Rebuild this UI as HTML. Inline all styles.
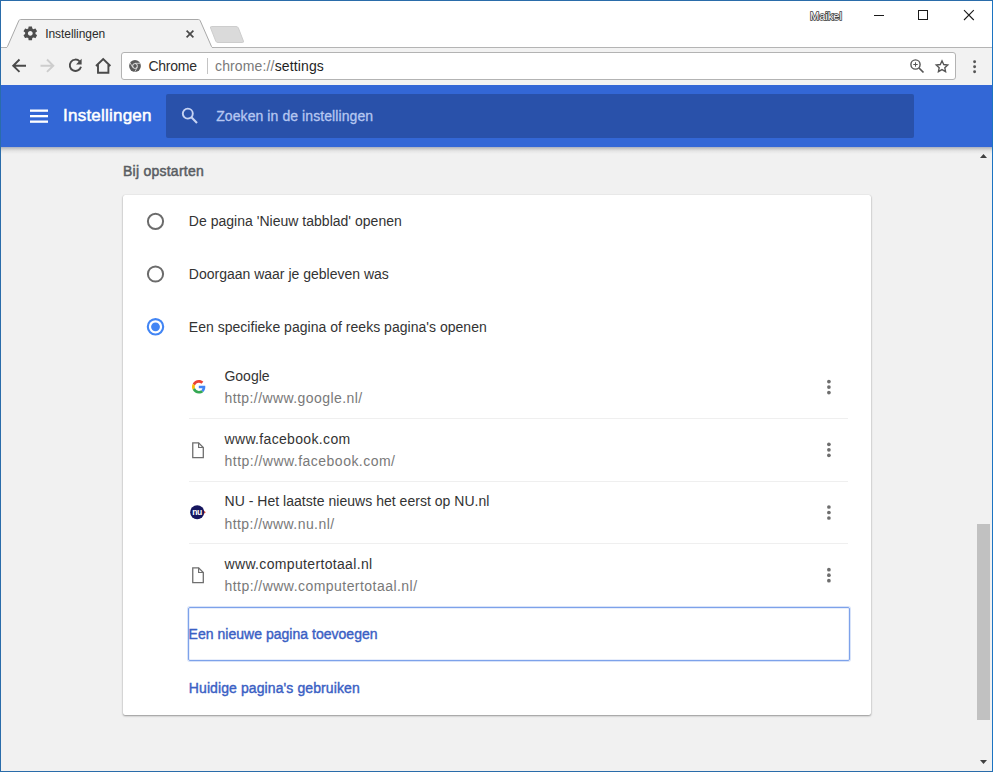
<!DOCTYPE html>
<html lang="nl">
<head>
<meta charset="utf-8">
<title>Instellingen</title>
<style>
*{box-sizing:border-box;margin:0;padding:0}
html,body{width:993px;height:772px;overflow:hidden;background:#fff}
body{font-family:"Liberation Sans",sans-serif;position:relative;color:#333}
.abs{position:absolute}
#c{position:absolute;left:0;top:0;width:993px;height:772px;overflow:hidden;background:#fff}
#toolbar{left:1px;top:48px;width:991px;height:37px;background:#f2f2f2}
#omni{left:121px;top:52px;width:835px;height:28px;background:#fff;border:1px solid #b3b3b3;border-radius:3px}
#osep{left:207px;top:58px;width:1px;height:16px;background:#c4c4c4}
#hdr{left:1px;top:85px;width:991px;height:62px;background:#3367d6}
#hdrshadow{left:1px;top:147px;width:991px;height:7px;background:linear-gradient(#a9b0c2 0,#c9c9c9 25%,#e4e4e4 55%,#f1f1f1 100%)}
#search{left:166px;top:94px;width:748px;height:44px;background:#2951aa;border-radius:2px}
#page{left:1px;top:147px;width:991px;height:624px;background:#f1f1f1}
#card{left:123px;top:195px;width:748px;height:520px;background:#fff;border-radius:2px;box-shadow:0 1px 2px rgba(0,0,0,.38),0 0 1px rgba(0,0,0,.18)}
#focus{left:188px;top:607px;width:662px;height:54px;border:1px solid #7da2ea;border-radius:2px;box-shadow:0 0 0 1px rgba(125,162,234,.3),inset 0 0 0 1px rgba(125,162,234,.18)}
.t{position:absolute;white-space:nowrap;line-height:20px;height:20px}
.sep{position:absolute;left:189px;width:659px;height:1px;background:#efefef}
#thumb{left:977px;top:524px;width:13px;height:196px;background:#c1c1c1}
#frame{left:0;top:0;width:993px;height:772px;border:1px solid #2a6caa;border-right-color:#1c74c2;pointer-events:none}
svg{position:absolute;overflow:visible}
</style>
</head>
<body>
<div id="c">

<!-- tab strip -->
<svg style="left:0;top:0" width="993" height="49" viewBox="0 0 993 49">
  <path d="M1 47.500 L992 47.500" fill="none" stroke="#b4b4b4" stroke-width="1"/>
  <path d="M5.500 48 L6.700 47.500 L7.600 46.300 L18.800 20.700 Q19.300 19.500 20.600 19.500 L198.400 19.500 Q199.700 19.500 200.200 20.700 L211.400 46.300 L212.300 47.500 L213.500 48 Z" fill="#f2f2f2"/>
  <path d="M5.500 47.500 L6.700 47.500 Q7.300 47 7.600 46.300 L18.800 20.700 Q19.300 19.500 20.600 19.500 L198.400 19.500 Q199.700 19.500 200.200 20.700 L211.400 46.300 Q211.700 47 212.300 47.500 L213.500 47.500" fill="none" stroke="#a9a9a9" stroke-width="1"/>
  <!-- new tab button -->
  <path d="M211.500 26.500 L236 26.500 Q237.800 26.500 238.400 28 L243.400 41 Q244 42.500 242.300 42.500 L218 42.500 Q216.300 42.500 215.700 41 L210.600 28 Q210 26.500 211.500 26.500 Z" fill="#dadada" stroke="#cdcdcd" stroke-width="1"/>
</svg>

<!-- tab favicon: gear -->
<svg style="left:22.300px;top:25.200px" width="16.600" height="16.600" viewBox="0 0 24 24"><path fill="#4d4d4d" d="M19.430 12.980c.04-.32.070-.64.070-.98s-.03-.66-.07-.98l2.110-1.650c.19-.15.240-.42.120-.64l-2-3.460c-.12-.22-.39-.3-.61-.22l-2.490 1c-.52-.4-1.080-.73-1.690-.98l-.38-2.650C14.460 2.180 14.250 2 14 2h-4c-.25 0-.46.180-.49.420l-.38 2.650c-.61.250-1.170.590-1.690.980l-2.490-1c-.23-.09-.49 0-.61.220l-2 3.460c-.13.220-.07.490.12.640l2.110 1.650c-.04.320-.07.650-.07.980s.03.660.07.980l-2.110 1.650c-.19.150-.24.420-.12.640l2 3.460c.12.220.39.300.61.220l2.490-1c.52.400 1.080.730 1.690.980l.38 2.650c.03.240.24.420.49.420h4c.25 0 .46-.18.490-.42l.38-2.650c.61-.25 1.170-.59 1.690-.98l2.490 1c.23.090.49 0 .61-.22l2-3.460c.12-.22.070-.49-.12-.64l-2.110-1.650zM12 15.500c-1.930 0-3.500-1.570-3.500-3.500s1.570-3.500 3.500-3.500 3.500 1.570 3.500 3.500-1.570 3.500-3.500 3.500z"/></svg>
<!-- tab close -->
<svg style="left:186px;top:30.300px" width="8" height="8" viewBox="0 0 8 8"><path d="M0.600 0.600L7.400 7.400M7.400 0.600L0.600 7.400" stroke="#4a4a4a" stroke-width="1.700" fill="none"/></svg>

<!-- window controls -->
<svg style="left:860px;top:0" width="132" height="30" viewBox="0 0 132 30">
  <rect x="14" y="15" width="10" height="1" fill="#1a1a1a"/>
  <rect x="58.500" y="10.500" width="9" height="9" fill="none" stroke="#1a1a1a" stroke-width="1"/>
  <path d="M104 10.200L113.800 20M113.800 10.200L104 20" stroke="#1a1a1a" stroke-width="1.100" fill="none"/>
</svg>

<div class="abs" id="toolbar"></div>
<div class="abs" id="omni"></div>
<div class="abs" id="osep"></div>

<!-- toolbar icons -->
<svg style="left:8px;top:50px" width="110" height="32" viewBox="0 0 110 32">
  <!-- back -->
  <path d="M18 15.700H5.500M11.500 9.500L5.200 15.700L11.500 21.900" stroke="#4a4a4a" stroke-width="1.900" fill="none"/>
  <!-- forward (disabled) -->
  <path d="M32.500 15.700H45M39 9.500L45.300 15.700L39 21.900" stroke="#cdcdcd" stroke-width="1.900" fill="none"/>
  <!-- reload -->
  <path d="M71.600 11.300A5.700 5.700 0 1 0 73 16.800" stroke="#4a4a4a" stroke-width="1.900" fill="none"/>
  <path d="M73.600 8.800V14.400H68z" fill="#4a4a4a"/>
  <!-- home -->
  <path d="M88 16L95.200 9L102.400 16M90 14.500V22.700H100.400V14.500" stroke="#4a4a4a" stroke-width="1.900" fill="none"/>
</svg>

<!-- omnibox chrome icon -->
<svg style="left:129px;top:60px" width="12" height="12" viewBox="0 0 12 12">
  <circle cx="6" cy="6" r="5.900" fill="#5a5a5a"/>
  <circle cx="6" cy="6" r="2.700" fill="#f3f3f3"/>
  <circle cx="6" cy="6" r="1.900" fill="#5a5a5a"/>
  <path d="M6 3.300H11.200M3.700 7.350L1.100 2.800M8.300 7.350L5.700 11.900" stroke="#f3f3f3" stroke-width="0.700" fill="none"/>
</svg>

<!-- omnibox right icons -->
<svg style="left:905px;top:54px" width="50" height="24" viewBox="0 0 50 24">
  <circle cx="10.500" cy="10.500" r="4.600" fill="none" stroke="#555" stroke-width="1.400"/>
  <path d="M14 14L18.500 18.500" stroke="#555" stroke-width="1.700" fill="none"/>
  <path d="M8.300 10.500H12.700M10.500 8.300V12.700" stroke="#555" stroke-width="1" fill="none"/>
  <path transform="translate(37 12.400) scale(0.900) translate(-37 -12.400)" d="M37 6.200L38.900 10.300L43.400 10.800L40.100 13.800L41 18.200L37 16L33 18.200L33.900 13.800L30.600 10.800L35.100 10.300Z" fill="none" stroke="#555" stroke-width="1.500" stroke-linejoin="miter"/>
</svg>
<svg style="left:972px;top:59px" width="6" height="15" viewBox="0 0 6 15">
  <circle cx="2.600" cy="2.700" r="1.450" fill="#555"/><circle cx="2.600" cy="7.700" r="1.450" fill="#555"/><circle cx="2.600" cy="12.700" r="1.450" fill="#555"/>
</svg>

<div class="abs" id="page"></div>
<div class="abs" id="hdrshadow"></div>
<div class="abs" id="hdr"></div>
<div class="abs" id="search"></div>

<!-- hamburger -->
<svg style="left:30px;top:109px" width="19" height="15" viewBox="0 0 19 15">
  <rect x="0" y="0.500" width="18" height="2.300" fill="#fff"/><rect x="0" y="6" width="18" height="2.300" fill="#fff"/><rect x="0" y="11.500" width="18" height="2.300" fill="#fff"/>
</svg>
<!-- search icon -->
<svg style="left:180px;top:106px" width="20" height="20" viewBox="0 0 20 20">
  <circle cx="7.800" cy="7.600" r="5" fill="none" stroke="#c6d3f3" stroke-width="1.900"/>
  <path d="M11.400 11.300L17 17" stroke="#c6d3f3" stroke-width="2.100" fill="none"/>
</svg>

<div class="abs" id="card"></div>

<!-- radios -->
<svg style="left:146px;top:212px" width="20" height="126" viewBox="0 0 20 126">
  <circle cx="9.500" cy="9.300" r="7.600" fill="#fff" stroke="#6b6b6b" stroke-width="2"/>
  <circle cx="9.500" cy="62" r="7.600" fill="#fff" stroke="#6b6b6b" stroke-width="2"/>
  <circle cx="9.500" cy="114.800" r="7.700" fill="#fff" stroke="#4285f4" stroke-width="2.100"/>
  <circle cx="9.500" cy="114.800" r="4.400" fill="#4285f4"/>
</svg>

<!-- favicons -->
<svg style="left:191.500px;top:380.400px" width="13.600" height="13.600" viewBox="0 0 48 48">
  <path fill="#EA4335" d="M24 9.500c3.540 0 6.710 1.220 9.210 3.600l6.850-6.850C35.900 2.380 30.470 0 24 0 14.620 0 6.510 5.380 2.560 13.220l7.980 6.190C12.430 13.720 17.740 9.500 24 9.500z"/>
  <path fill="#4285F4" d="M46.980 24.550c0-1.570-.15-3.090-.38-4.550H24v9.020h12.940c-.58 2.960-2.260 5.480-4.780 7.180l7.730 6c4.510-4.180 7.090-10.360 7.090-17.650z"/>
  <path fill="#FBBC05" d="M10.530 28.590c-.48-1.450-.76-2.990-.76-4.590s.27-3.140.76-4.590l-7.980-6.190C.92 16.460 0 20.120 0 24c0 3.880.92 7.540 2.560 10.780l7.970-6.190z"/>
  <path fill="#34A853" d="M24 48c6.480 0 11.930-2.130 15.890-5.810l-7.730-6c-2.150 1.450-4.920 2.300-8.160 2.300-6.260 0-11.570-4.220-13.470-9.910l-7.980 6.190C6.510 42.620 14.620 48 24 48z"/>
</svg>
<svg style="left:192px;top:441.500px" width="13" height="17" viewBox="0 0 13 17">
  <path d="M0.750 0.850H6.600L11.300 5.500V15.650H0.750Z" fill="#fff" stroke="#6f6f6f" stroke-width="1.300" stroke-linejoin="miter"/>
  <path d="M6.600 0.850V5.500H11.300" fill="none" stroke="#6f6f6f" stroke-width="1.200"/>
</svg>
<svg style="left:189px;top:504px" width="19" height="17" viewBox="0 0 19 17">
  <path d="M14.800 6.400L16.800 8.200L14.800 10Z" fill="#e8553c"/>
  <circle cx="8.200" cy="8.200" r="7" fill="#15155e"/>
  <text x="8" y="10.700" text-anchor="middle" font-family="Liberation Sans, sans-serif" font-weight="bold" font-size="8.600" fill="#fff" letter-spacing="-0.500">nu</text>
</svg>
<svg style="left:192px;top:567px" width="13" height="17" viewBox="0 0 13 17">
  <path d="M0.750 0.850H6.600L11.300 5.500V15.650H0.750Z" fill="#fff" stroke="#6f6f6f" stroke-width="1.300" stroke-linejoin="miter"/>
  <path d="M6.600 0.850V5.500H11.300" fill="none" stroke="#6f6f6f" stroke-width="1.200"/>
</svg>

<!-- more_vert dots -->
<svg style="left:826px;top:379px" width="6" height="206" viewBox="0 0 6 206">
  <g fill="#6e6e6e">
  <circle cx="2.900" cy="2.600" r="1.850"/><circle cx="2.900" cy="8.100" r="1.850"/><circle cx="2.900" cy="13.600" r="1.850"/>
  <circle cx="2.900" cy="65.300" r="1.850"/><circle cx="2.900" cy="70.800" r="1.850"/><circle cx="2.900" cy="76.300" r="1.850"/>
  <circle cx="2.900" cy="128" r="1.850"/><circle cx="2.900" cy="133.500" r="1.850"/><circle cx="2.900" cy="139" r="1.850"/>
  <circle cx="2.900" cy="190.700" r="1.850"/><circle cx="2.900" cy="196.200" r="1.850"/><circle cx="2.900" cy="201.700" r="1.850"/>
  </g>
</svg>

<div class="sep" style="top:418px"></div>
<div class="sep" style="top:481px"></div>
<div class="sep" style="top:543px"></div>
<div class="abs" id="focus"></div>

<!-- scrollbar -->
<svg style="left:976px;top:150px" width="16" height="621" viewBox="0 0 16 621">
  <path d="M4 8L7.500 4L11 8Z" fill="#404040"/>
  <path d="M4 610L7.500 614L11 610Z" fill="#404040"/>
</svg>
<div class="abs" id="thumb"></div>

<div class="t" id="tabtitle" style="left:45.2px;top:23.8px;font-size:12px;color:#2b2b2b;letter-spacing:-0.060px;">Instellingen</div>
<div class="t" id="user" style="left:810px;top:5.5px;font-size:11px;color:#fff;letter-spacing:0.034px;-webkit-text-stroke:1.500px #3c3c3c;paint-order:stroke fill;">Maikel</div>
<div class="t" id="omni1" style="left:148.4px;top:56.0px;font-size:14px;color:#2e2e2e;letter-spacing:-0.249px;">Chrome</div>
<div class="t" id="omni2" style="left:215px;top:56.0px;font-size:14px;color:#7a7a7a;letter-spacing:0.14px">chrome://<span style="color:#1f1f1f">settings</span></div>
<div class="t" id="hdrtitle" style="left:63.1px;top:105.7px;font-size:17px;color:#fff;letter-spacing:0.215px;-webkit-text-stroke:0.5px #fff;">Instellingen</div>
<div class="t" id="srch" style="left:216.2px;top:105.8px;font-size:14px;color:#b6c7f1;letter-spacing:0.084px;-webkit-text-stroke:0.3px #b6c7f1;">Zoeken in de instellingen</div>
<div class="t" id="sect" style="left:123px;top:160.9px;font-size:14px;color:#595d63;letter-spacing:0.244px;-webkit-text-stroke:0.5px #595d63;">Bij opstarten</div>
<div class="t" id="r1" style="left:188.8px;top:211.1px;font-size:14px;color:#333;letter-spacing:0.019px;">De pagina 'Nieuw tabblad' openen</div>
<div class="t" id="r2" style="left:188.8px;top:263.9px;font-size:14px;color:#333;">Doorgaan waar je gebleven was</div>
<div class="t" id="r3" style="left:188.8px;top:316.6px;font-size:14px;color:#333;letter-spacing:0.024px;">Een specifieke pagina of reeks pagina's openen</div>
<div class="t" id="t1" style="left:224.5px;top:366.0px;font-size:14px;color:#333;letter-spacing:-0.026px;">Google</div>
<div class="t" id="u1" style="left:224.5px;top:388.3px;font-size:14px;color:#797979;letter-spacing:0.420px;">http://www.google.nl/</div>
<div class="t" id="t2" style="left:224.5px;top:428.7px;font-size:14px;color:#333;letter-spacing:0.337px;">www.facebook.com</div>
<div class="t" id="u2" style="left:224.5px;top:451.0px;font-size:14px;color:#797979;letter-spacing:0.478px;">http://www.facebook.com/</div>
<div class="t" id="t3" style="left:224.5px;top:491.4px;font-size:14px;color:#333;letter-spacing:0.029px;">NU - Het laatste nieuws het eerst op NU.nl</div>
<div class="t" id="u3" style="left:224.5px;top:513.7px;font-size:14px;color:#797979;letter-spacing:0.428px;">http://www.nu.nl/</div>
<div class="t" id="t4" style="left:224.5px;top:554.1px;font-size:14px;color:#333;letter-spacing:0.341px;">www.computertotaal.nl</div>
<div class="t" id="u4" style="left:224.5px;top:576.4px;font-size:14px;color:#797979;letter-spacing:0.456px;">http://www.computertotaal.nl/</div>
<div class="t" id="add" style="left:188.6px;top:624.0px;font-size:14px;color:#3a60c4;letter-spacing:0.023px;-webkit-text-stroke:0.4px #3a60c4;">Een nieuwe pagina toevoegen</div>
<div class="t" id="cur" style="left:188.8px;top:678.0px;font-size:14px;color:#3a60c4;letter-spacing:0.097px;-webkit-text-stroke:0.4px #3a60c4;">Huidige pagina's gebruiken</div>
<div class="abs" id="frame"></div>
</div>
</body>
</html>
